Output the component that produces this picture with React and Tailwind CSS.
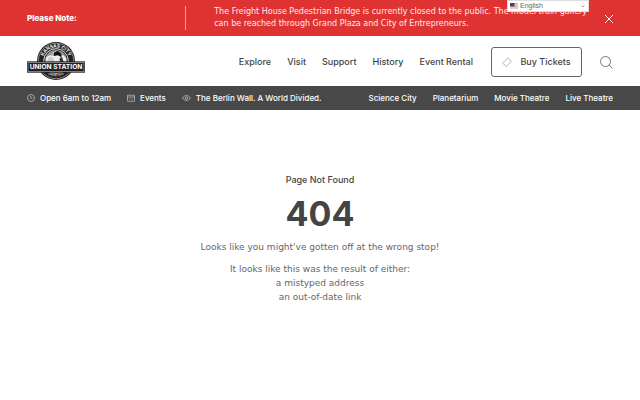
import { useState } from "react";

const mainLinks = ["Explore", "Visit", "Support", "History", "Event Rental"];
const venueLinks = ["Science City", "Planetarium", "Movie Theatre", "Live Theatre"];

function Logo() {
  return (
    <svg viewBox="0 0 174 114" className="h-[38px] w-[58px]" role="img" aria-label="Kansas City Union Station">
      <defs>
        <path id="arc-top" d="M46 58 A41 41 0 0 1 128 58" />
        <path id="arc-bottom" d="M44 76 A48 48 0 0 0 130 76" />
      </defs>
      <circle cx="87" cy="57" r="57" fill="#222" />
      <circle cx="87" cy="57" r="53" fill="none" stroke="#bbb" strokeWidth="2" />
      <circle cx="87" cy="57" r="37" fill="#222" stroke="#ddd" strokeWidth="3" />
      <circle cx="87" cy="57" r="33" fill="#999" />
      <path d="M57 62V46l14-7 6 3V32l13-6 10 9v8l8-4 9 8v15z" fill="#eee" />
      <path d="M80 42V32l12-6 11 9v11l-10-6z" fill="#111" />
      <path d="M62 60V49l10-5 9 6v10z" fill="#ccc" />
      <path d="M98 60V49l7-5 5 16z" fill="#333" />
      <text fill="#eee" fontFamily="Inter, sans-serif" fontSize="14" fontWeight="700">
        <textPath href="#arc-top" startOffset="50%" textAnchor="middle">KANSAS CITY</textPath>
      </text>
      <text fill="#ccc" fontFamily="Inter, sans-serif" fontSize="9" fontWeight="700">
        <textPath href="#arc-bottom" startOffset="50%" textAnchor="middle">SINCE 1914</textPath>
      </text>
      <rect x="0" y="58" width="174" height="34" fill="#222" />
      <rect x="3" y="61" width="168" height="28" fill="none" stroke="#aaa" strokeWidth="2" />
      <text x="87" y="82" textAnchor="middle" fill="#fff" fontFamily="Inter, sans-serif" fontSize="20" fontWeight="700">
        UNION STATION
      </text>
    </svg>
  );
}

function ClockIcon() {
  return (
    <svg viewBox="0 0 16 16" className="size-2" fill="none" stroke="#ccc" strokeWidth="1.4">
      <circle cx="8" cy="8" r="7" />
      <path d="M7.5 4v4.5H11" />
    </svg>
  );
}

function CalendarIcon() {
  return (
    <svg viewBox="0 0 16 16" className="size-2" fill="none" stroke="#ccc" strokeWidth="1.3">
      <path d="M1 2.5h14v12H1zM1 6h14" />
      <path d="M4 9h8M4 12h8" strokeDasharray="2 1" stroke="#888" />
    </svg>
  );
}

function EyeIcon() {
  return (
    <svg viewBox="0 0 18 12" className="h-[6px] w-[9px]" fill="none" stroke="#ccc" strokeWidth="1.4">
      <path d="M1 6c4-6.500 12-6.500 16 0-4 6.500-12 6.500-16 0z" />
      <circle cx="9" cy="6" r="2.500" />
    </svg>
  );
}

function TicketIcon() {
  return (
    <svg viewBox="0 0 20 20" className="size-[10px]" fill="none" stroke="#999" strokeWidth="1.4">
      <path d="M1 12.500 12 1.500l2 2a2.500 2.500 0 0 0 3 3l2 2L8 19l-2-2a2.500 2.500 0 0 0-3-3z" />
    </svg>
  );
}

function LanguagePicker() {
  return (
    <div className="absolute top-0 right-[51px] h-3 w-[82px] bg-white">
      <svg viewBox="0 0 16 12" className="pointer-events-none absolute top-[3px] left-[3px] h-[6px] w-2">
        <path fill="#eee" d="M0 0h16v12H0z" />
        <path stroke="#c99" strokeWidth="1.500" d="M0 1h16M0 4h16M0 7h16M0 10h16" />
        <path fill="#446" d="M0 0h9v7H0z" />
      </svg>
      <select
        aria-label="Language"
        className="block h-3 w-full appearance-none border border-[#ddd] bg-transparent pl-3 font-['Liberation_Sans',sans-serif] text-[7px] leading-[10px] text-[#666]"
      >
        <option>English</option>
      </select>
      <svg viewBox="0 0 8 6" className="pointer-events-none absolute top-[5px] right-1 h-[3px] w-1" fill="none" stroke="#888" strokeWidth="1.500">
        <path d="m1 1 3 3 3-3" />
      </svg>
    </div>
  );
}

function Notice({ onClose }) {
  return (
    <section className="flex h-9 items-center bg-[#df3333] px-[27px] text-white">
      <h2 className="w-[27%] text-[8px] leading-3 font-extrabold">Please Note:</h2>
      <p className="flex h-6 flex-1 items-center border-l border-[#f0a0a0] pl-7 font-['DejaVu_Sans',sans-serif] text-[8px] leading-3 whitespace-nowrap text-[#fdeaea]">
        <span>
          The Freight House Pedestrian Bridge is currently closed to the public. The model train gallery
          <br />
          can be reached through Grand Plaza and City of Entrepreneurs.
        </span>
      </p>
      <button type="button" aria-label="Close notice" onClick={onClose} className="pt-[2px]">
        <svg viewBox="0 0 8 8" className="size-2" stroke="#fff" strokeWidth="1">
          <path d="m0 0 8 8M8 0 0 8" />
        </svg>
      </button>
    </section>
  );
}

export default function App() {
  const [noticeOpen, setNoticeOpen] = useState(true);

  return (
    <div className="relative flex min-h-screen flex-col bg-white font-[Inter,'Noto_Sans',sans-serif] text-[#444]">
      {noticeOpen && <Notice onClose={() => setNoticeOpen(false)} />}
      <LanguagePicker />

      <header>
        <div className="flex h-[50px] items-center justify-between px-[27px]">
          <a href="#home">
            <Logo />
          </a>
          <div className="flex items-center gap-[18px] pt-[2px] text-[9px] leading-3 font-medium">
            <nav className="flex gap-4">
              {mainLinks.map((label) => (
                <a key={label} href="#nav">
                  {label}
                </a>
              ))}
            </nav>
            <button
              type="button"
              className="flex h-[30px] w-[91px] items-center justify-center gap-2 rounded-[3px] border border-[#666]"
            >
              <TicketIcon />
              Buy Tickets
            </button>
            <button type="button" aria-label="Search">
              <svg viewBox="0 0 26 26" className="size-[13px]" fill="none" stroke="#555" strokeWidth="1.600">
                <circle cx="11" cy="11" r="10" />
                <path d="m18 18 7 7" />
              </svg>
            </button>
          </div>
        </div>

        <div className="flex h-6 items-center justify-between bg-[#484848] px-[27px] text-[8px] leading-3 font-medium text-white">
          <div className="flex gap-4">
            <a href="#hours" className="flex items-center gap-[5px]">
              <ClockIcon />
              Open 6am to 12am
            </a>
            <a href="#events" className="flex items-center gap-[5px]">
              <CalendarIcon />
              Events
            </a>
            <a href="#exhibit" className="flex items-center gap-[5px]">
              <EyeIcon />
              The Berlin Wall. A World Divided.
            </a>
          </div>
          <nav className="flex gap-4">
            {venueLinks.map((label) => (
              <a key={label} href="#venue">
                {label}
              </a>
            ))}
          </nav>
        </div>
      </header>

      <main className="flex-1 pt-16 text-center">
        <p className="text-[9px] leading-3 font-medium">Page Not Found</p>
        <h1 className="pt-2 text-[34px] leading-10 font-bold">404</h1>
        <div className="space-y-2 pt-[6px] font-['DejaVu_Sans',sans-serif] text-[9px] leading-[14px] text-[#666]">
          <p>Looks like you might've gotten off at the wrong stop!</p>
          <p>
            It looks like this was the result of either:
            <br />
            a mistyped address
            <br />
            an out-of-date link
          </p>
        </div>
      </main>
    </div>
  );
}
